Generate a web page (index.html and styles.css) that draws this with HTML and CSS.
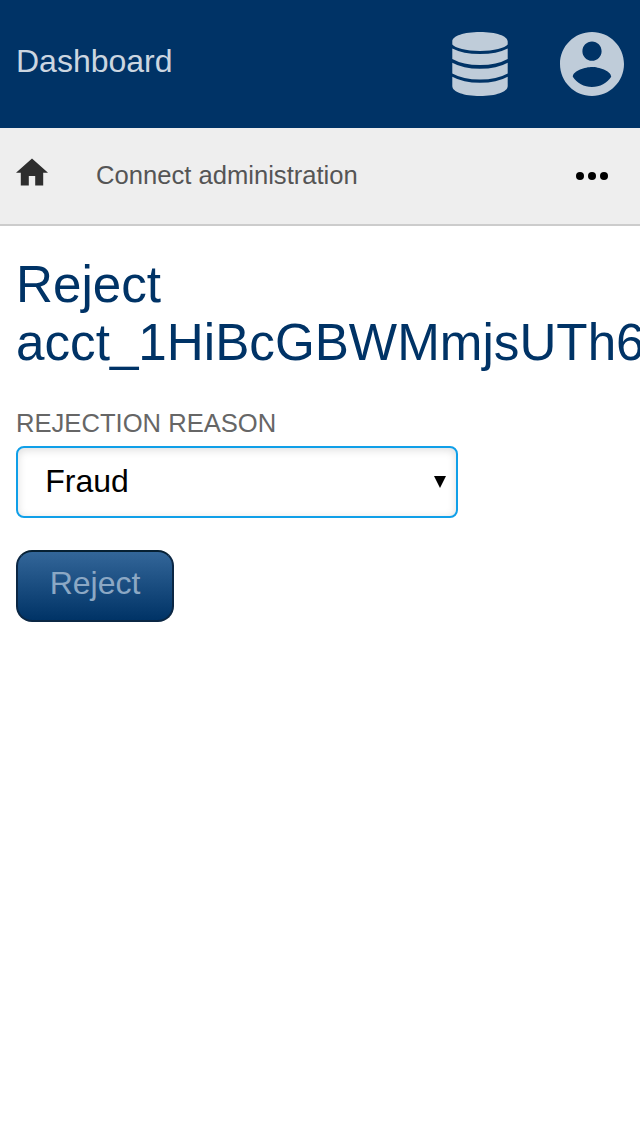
FILE: index.html
```html
<!DOCTYPE html>
<html lang="en">
<head>
<meta charset="utf-8">
<title>Reject account</title>
<link rel="stylesheet" href="styles.css">
</head>
<body>
<header class="header">
  <a class="brand">Dashboard</a>
  <nav class="header-icons">
    <svg class="database" viewBox="0 0 56 64"><path d="M.3 9.500C.3 4 12 0 28 0S55.700 4 55.700 9.500V12.500C53 16 42 19 28 19S3 16 .3 12.500ZM.3 16.500Q11 22 28 22T55.700 16.500V27Q45 33 28 33T.3 27ZM.3 30.700Q11 36.700 28 36.700T55.700 30.700V41.500Q45 47.500 28 47.500T.3 41.500ZM.3 44.800Q11 50.800 28 50.800T55.700 44.800V54C55.700 60 44 64 28 64S.3 60 .3 54Z"/></svg>
    <svg class="account" viewBox="2 2 20 20"><path d="M12 2C6.480 2 2 6.480 2 12s4.480 10 10 10 10-4.480 10-10S17.520 2 12 2zm0 3c1.660 0 3 1.340 3 3s-1.340 3-3 3-3-1.340-3-3 1.340-3 3-3zm0 14.200c-2.500 0-4.710-1.280-6-3.220.030-1.990 4-3.080 6-3.080 1.990 0 5.970 1.090 6 3.080-1.290 1.940-3.500 3.220-6 3.220z"/></svg>
  </nav>
</header>
<nav class="navbar">
  <svg class="home" viewBox="2 3 20 17"><path d="M10 20v-6h4v6h5v-8h3L12 3 2 12h3v8z"/></svg>
  <a class="crumb">Connect administration</a>
  <svg class="more" viewBox="0 0 32 8"><circle cx="4" cy="4" r="4"/><circle cx="16" cy="4" r="4"/><circle cx="28" cy="4" r="4"/></svg>
</nav>
<main class="content">
  <h1 class="title">Reject acct_1HiBcGBWMmjsUTh6</h1>
  <form>
    <label class="label">REJECTION REASON</label>
    <div class="select"><span>Fraud</span><svg class="arrow" viewBox="0 0 12 12"><path d="M0 0h12L6 12z"/></svg></div>
    <button class="button" type="button">Reject</button>
  </form>
</main>
</body>
</html>
```

FILE: styles.css
```css
* { box-sizing: border-box; }
body { margin: 0; overflow: hidden; background: #fff; font-family: "Liberation Sans", Arial, sans-serif; }
svg { display: block; }
.header { height: 128px; padding: 0 16px; display: flex; justify-content: space-between; background: #003366; }
.brand { padding-top: 43px; font-size: 32px; line-height: 37px; color: #ccd6e0; }
.header-icons { display: flex; gap: 52px; padding-top: 32px; fill: #bfccd9; }
.database { width: 56px; height: 64px; }
.account { width: 64px; height: 64px; }
.navbar { height: 98px; padding: 0 32px 0 16px; display: flex; background: #eee; border-bottom: 2px solid #ccc; }
.home { width: 32px; height: 28px; margin-top: 30px; fill: #2e2e2e; }
.crumb { margin: 32px auto 0 48px; font-size: 25.6px; line-height: 30px; color: #555; }
.more { width: 32px; height: 8px; margin-top: 44px; }
.content { padding: 30px 16px; }
.title { margin: 0; font-size: 51.2px; line-height: 58px; font-weight: 400; color: #003366; }
.label { display: block; margin-top: 36px; font-size: 25.6px; line-height: 30px; color: #666; }
.select { width: 442px; height: 72px; margin-top: 8px; padding: 0 10px 2px 27.2px; display: flex; align-items: center; justify-content: space-between; border: 2px solid #109fe8; border-radius: 8px; box-shadow: inset 0 2px 8px #ddd; font-size: 32px; }
.arrow { width: 12px; height: 12px; margin-top: 2px; }
.button { display: block; width: 158px; height: 72px; margin-top: 32px; padding: 0 0 6px; border: 2px solid #0b2744; border-top-color: #062033; border-radius: 16px; background: linear-gradient(#336699, #003366); color: #8ca8c4; font: 32px "Liberation Sans", Arial, sans-serif; }
```
